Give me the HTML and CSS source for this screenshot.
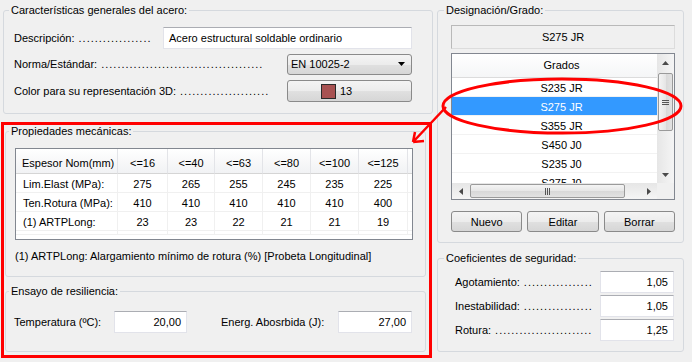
FILE: index.html
```html
<!DOCTYPE html>
<html lang="es">
<head>
    <meta charset="UTF-8">
    <title>Características del acero</title>
    <link rel="stylesheet" href="styles.css">
</head>
<body>

<div class="window">

    <div class="col-left">
        <fieldset class="group general">
            <legend>Características generales del acero:</legend>
            <div class="body">
                <div class="row">
                    <span class="lbl">Descripción:<span class="dots">..................</span></span>
                    <div class="textbox desc">Acero estructural soldable ordinario</div>
                </div>
                <div class="row">
                    <span class="lbl">Norma/Estándar:<span class="dots">........................................</span></span>
                    <div class="combo">
                        <span>EN 10025-2</span>
                        <svg class="arrow" width="7" height="4" viewBox="0 0 7 4"><path d="M0 0H7L3.5 4Z"/></svg>
                    </div>
                </div>
                <div class="row color-row">
                    <span class="lbl">Color para su representación 3D:<span class="dots">......................</span></span>
                    <div class="btn color-btn"><span class="swatch"></span>13</div>
                </div>
            </div>
        </fieldset>

        <div class="marked">
            <fieldset class="group props-group">
                <legend>Propiedades mecánicas:</legend>
                <div class="body">
                    <div class="grid-wrap">
                        <table class="props">
                            <colgroup>
                                <col class="c-first"><col class="c-50"><col class="c-47"><col class="c-48">
                                <col class="c-48"><col class="c-48"><col class="c-49"><col class="c-fill">
                            </colgroup>
                            <thead>
                                <tr><th class="first">Espesor Nom(mm)</th><th>&lt;=16</th><th>&lt;=40</th><th>&lt;=63</th><th>&lt;=80</th><th>&lt;=100</th><th>&lt;=125</th><th class="fill"></th></tr>
                            </thead>
                            <tbody>
                                <tr><td class="first">Lim.Elast (MPa):</td><td>275</td><td>265</td><td>255</td><td>245</td><td>235</td><td>225</td><td class="fill"></td></tr>
                                <tr><td class="first">Ten.Rotura (MPa):</td><td>410</td><td>410</td><td>410</td><td>410</td><td>410</td><td>400</td><td class="fill"></td></tr>
                                <tr><td class="first">(1) ARTPLong:</td><td>23</td><td>23</td><td>22</td><td>21</td><td>21</td><td>19</td><td class="fill"></td></tr>
                                <tr><td class="first"></td><td></td><td></td><td></td><td></td><td></td><td></td><td class="fill"></td></tr>
                            </tbody>
                        </table>
                    </div>
                    <div class="note">(1) ARTPLong: Alargamiento mínimo de rotura (%) [Probeta Longitudinal]</div>
                </div>
            </fieldset>

            <fieldset class="group resil">
                <legend>Ensayo de resiliencia:</legend>
                <div class="body resil-row">
                    <span class="resil-lbl temp">Temperatura (ºC):</span>
                    <div class="textbox num temp-box">20,00</div>
                    <span class="resil-lbl energ">Energ. Abosrbida (J):</span>
                    <div class="textbox num energ-box">27,00</div>
                </div>
            </fieldset>
        </div>
    </div>

    <div class="col-right">
        <fieldset class="group desig">
            <legend>Designación/Grado:</legend>
            <div class="body">
                <div class="display">S275 JR</div>

                <div class="list">
                    <div class="list-view">
                        <div class="list-head">Grados</div>
                        <div class="list-item">S235 JR</div>
                        <div class="list-item sel">S275 JR</div>
                        <div class="list-item">S355 JR</div>
                        <div class="list-item">S450 J0</div>
                        <div class="list-item">S235 J0</div>
                        <div class="list-item">S275 J0</div>
                    </div>
                    <div class="vscroll">
                        <div class="sb-btn"><svg width="7" height="4" viewBox="0 0 7 4"><path d="M0 4L3.5 0L7 4Z"/></svg></div>
                        <div class="thumb vthumb"><span class="grip"></span></div>
                        <div class="sb-btn down"><svg width="7" height="4" viewBox="0 0 7 4"><path d="M0 0H7L3.5 4Z"/></svg></div>
                    </div>
                    <div class="hscroll">
                        <div class="sb-btn"><svg width="4" height="7" viewBox="0 0 4 7"><path d="M4 0V7L0 3.5Z"/></svg></div>
                        <div class="thumb hthumb"><span class="grip"></span></div>
                        <div class="sb-btn right"><svg width="4" height="7" viewBox="0 0 4 7"><path d="M0 0V7L4 3.5Z"/></svg></div>
                    </div>
                    <div class="corner"></div>
                </div>

                <div class="btns">
                    <div class="btn">Nuevo</div>
                    <div class="btn">Editar</div>
                    <div class="btn">Borrar</div>
                </div>
            </div>
        </fieldset>

        <fieldset class="group coef">
            <legend>Coeficientes de seguridad:</legend>
            <div class="body">
                <div class="row">
                    <span class="lbl">Agotamiento:<span class="dots">.................</span></span>
                    <div class="textbox num coef-box">1,05</div>
                </div>
                <div class="row">
                    <span class="lbl">Inestabilidad:<span class="dots">.................</span></span>
                    <div class="textbox num coef-box">1,05</div>
                </div>
                <div class="row">
                    <span class="lbl">Rotura:<span class="dots">........................</span></span>
                    <div class="textbox num coef-box">1,25</div>
                </div>
            </div>
        </fieldset>
    </div>

    <!-- annotation drawn over the dialog -->
    <svg class="marks" width="692" height="362" viewBox="0 0 692 362">
        <ellipse cx="562" cy="106" rx="119" ry="27" fill="none" stroke="#f00" stroke-width="3"/>
        <path d="M446 107L413 142M413 142L415 132M413 142L424 141" fill="none" stroke="#f00" stroke-width="2.5"/>
    </svg>
</div>

</body>
</html>
```

FILE: styles.css
```css
* {
    box-sizing: border-box;
}
body {
    margin: 0;
    background: #f0f0f0;
    font-family: "Liberation Sans", Arial, sans-serif;
    font-size: 11px;
    color: #000;
}
.window {
    position: relative;
    display: flex;
    align-items: flex-start;
    gap: 4px;
    width: 692px;
    height: 362px;
    padding: 4px 0 0 1px;
    overflow: hidden;
}
.col-left {
    width: 432px;
}
.col-right {
    width: 247px;
}

/* group boxes */
.group {
    margin: 0;
    padding: 0;
    min-width: 0;
    border: 1px solid #d5d9de;
    border-radius: 3px;
}
.group legend {
    padding: 0 2px;
    line-height: 13px;
    margin-left: 5px;
}
.general {
    margin-left: 2px;
    width: 430px;
}
.general .body {
    padding: 10px 20px 11px 10px;
}

.row {
    display: flex;
    align-items: center;
    height: 22px;
}
.row + .row {
    margin-top: 4px;
}
.row.color-row {
    margin-top: 5px;
}
.lbl {
    white-space: nowrap;
}
.lbl .dots {
    letter-spacing: 1px;
    padding-left: 4px;
}

/* controls */
.textbox {
    height: 22px;
    background: #fff;
    border: 1px solid #e2e3ea;
    border-top-color: #abadb3;
    line-height: 20px;
    padding: 0 5px;
    white-space: nowrap;
}
.textbox.num {
    text-align: right;
}
.desc {
    margin-left: auto;
    width: 249px;
}
.combo {
    margin-left: auto;
    width: 125px;
    height: 21px;
    display: flex;
    align-items: center;
    padding: 0 6px 0 3px;
    border: 1px solid #8a8a8a;
    border-radius: 3px;
    background: linear-gradient(#f4f4f4, #ececec 50%, #e0e0e0 51%, #d6d6d6);
}
.combo .arrow {
    margin-left: auto;
}
.btn {
    height: 22px;
    display: flex;
    align-items: center;
    justify-content: center;
    border: 1px solid #8a8a8a;
    border-radius: 3px;
    background: linear-gradient(#f4f4f4, #ececec 50%, #e0e0e0 51%, #d6d6d6);
}
.color-btn {
    margin-left: auto;
    width: 125px;
    justify-content: flex-start;
    padding-left: 33px;
}
.swatch {
    width: 15px;
    height: 15px;
    margin-right: 4px;
    background: #a85252;
    border: 1px solid #2a2a2a;
}

/* red marked area */
.marked {
    margin-top: 8px;
    width: 431px;
    border: 3px solid #f00;
    padding: 0 3px 3px 1px;
}
.props-group legend,
.resil legend {
    margin-left: 3px;
}
.props-group .body {
    padding: 10px 12px 13px 9px;
}
.grid-wrap {
    height: 92px;
    overflow: hidden;
    background: #fff;
    border: 1px solid #828790;
}
.props {
    table-layout: fixed;
    width: 396px;
    border-collapse: separate;
    border-spacing: 0;
}
.c-first { width: 102px; }
.c-50 { width: 50px; }
.c-47 { width: 47px; }
.c-48 { width: 48px; }
.c-49 { width: 49px; }
.c-fill { width: 4px; }
.props th {
    font-weight: normal;
    line-height: 18px;
    padding: 5px 0 1px;
    border-bottom: 1px solid #d5d5d5;
    border-right: 1px solid #e3e4e8;
    background: linear-gradient(#ffffff, #f1f2f4);
    text-align: center;
    white-space: nowrap;
}
.props td {
    line-height: 15px;
    padding: 3px 0 0;
    border-bottom: 1px solid #f0f0f0;
    border-right: 1px solid #f0f0f0;
    text-align: center;
    white-space: nowrap;
}
.props th.first {
    text-align: left;
    padding-left: 6px;
}
.props td.first {
    text-align: left;
    padding-left: 7px;
}
.props .fill {
    border-right: none;
}
.note {
    margin-top: 10px;
    line-height: 13px;
}
.resil {
    margin-top: 8px;
}
.resil-row {
    display: flex;
    align-items: center;
    padding: 13px 13px 18px 8px;
}
.resil-lbl.temp {
    width: 100px;
}
.temp-box {
    width: 73px;
}
.resil-lbl.energ {
    width: 117px;
    margin-left: 34px;
}
.energ-box {
    width: 74px;
}

/* right column */
.desig legend,
.coef legend {
    margin-left: 6px;
}
.desig .body {
    padding: 8px 8px 10px 13px;
}
.display {
    height: 24px;
    line-height: 22px;
    text-align: center;
    border: 1px solid #dcdcdc;
    border-top-color: #b9b9b9;
    border-left-color: #b9b9b9;
}
.list {
    margin-top: 4px;
    height: 147px;
    display: grid;
    grid-template-columns: 205px 17px;
    grid-template-rows: 129px 16px;
    border: 1px solid #828790;
    background: #fff;
}
.list-view {
    overflow: hidden;
}
.list-head {
    height: 24px;
    line-height: 22px;
    padding-left: 14px;
    text-align: center;
    border-bottom: 1px solid #dcdcdc;
    background: linear-gradient(#ffffff, #f5f6f7);
}
.list-item {
    height: 19px;
    line-height: 17px;
    padding: 2px 0 0 14px;
    text-align: center;
    border-bottom: 1px solid #f2f2f2;
}
.list-item.sel {
    background: #3399ff;
    color: #fff;
}
.vscroll {
    display: flex;
    flex-direction: column;
    background: linear-gradient(to right, #e6e6e6, #f5f5f5);
}
.hscroll {
    display: flex;
    background: linear-gradient(#e6e6e6, #f5f5f5);
}
.corner {
    background: #f0f0f0;
}
.sb-btn {
    width: 17px;
    height: 17px;
    display: flex;
    align-items: center;
    justify-content: center;
    fill: #4a4a4a;
}
.hscroll .sb-btn {
    height: 16px;
}
.sb-btn.down,
.sb-btn.right {
    margin-left: auto;
    margin-top: auto;
}
.thumb {
    display: flex;
    align-items: center;
    justify-content: center;
    border: 1px solid #9a9a9a;
    border-radius: 2px;
}
.vthumb {
    width: 15px;
    height: 58px;
    margin: 2px 0 0 1px;
    background: linear-gradient(to right, #f4f4f4, #e6e6e6 50%, #d8d8d8 51%, #e2e2e2);
}
.hthumb {
    width: 155px;
    height: 14px;
    margin: 1px 0 0 1px;
    background: linear-gradient(#f4f4f4, #e6e6e6 50%, #d8d8d8 51%, #e2e2e2);
}
.vthumb .grip {
    width: 7px;
    height: 5px;
    border-top: 1px solid #555;
    border-bottom: 1px solid #555;
    background: linear-gradient(transparent 1px, #555 1px, #555 2px, transparent 2px);
}
.hthumb .grip {
    width: 5px;
    height: 7px;
    border-left: 1px solid #555;
    border-right: 1px solid #555;
    background: linear-gradient(to right, transparent 1px, #555 1px, #555 2px, transparent 2px);
}
.btns {
    display: flex;
    gap: 5px;
    margin-top: 11px;
}
.btns .btn {
    flex: 1;
    height: 21px;
}
.coef {
    margin-top: 9px;
}
.coef .body {
    padding: 6px 9px 10px 17px;
}
.coef .row + .row {
    margin-top: 2px;
}
.coef-box {
    margin-left: auto;
    width: 74px;
}

.marks {
    position: absolute;
    top: 0;
    left: 0;
    pointer-events: none;
}
```
